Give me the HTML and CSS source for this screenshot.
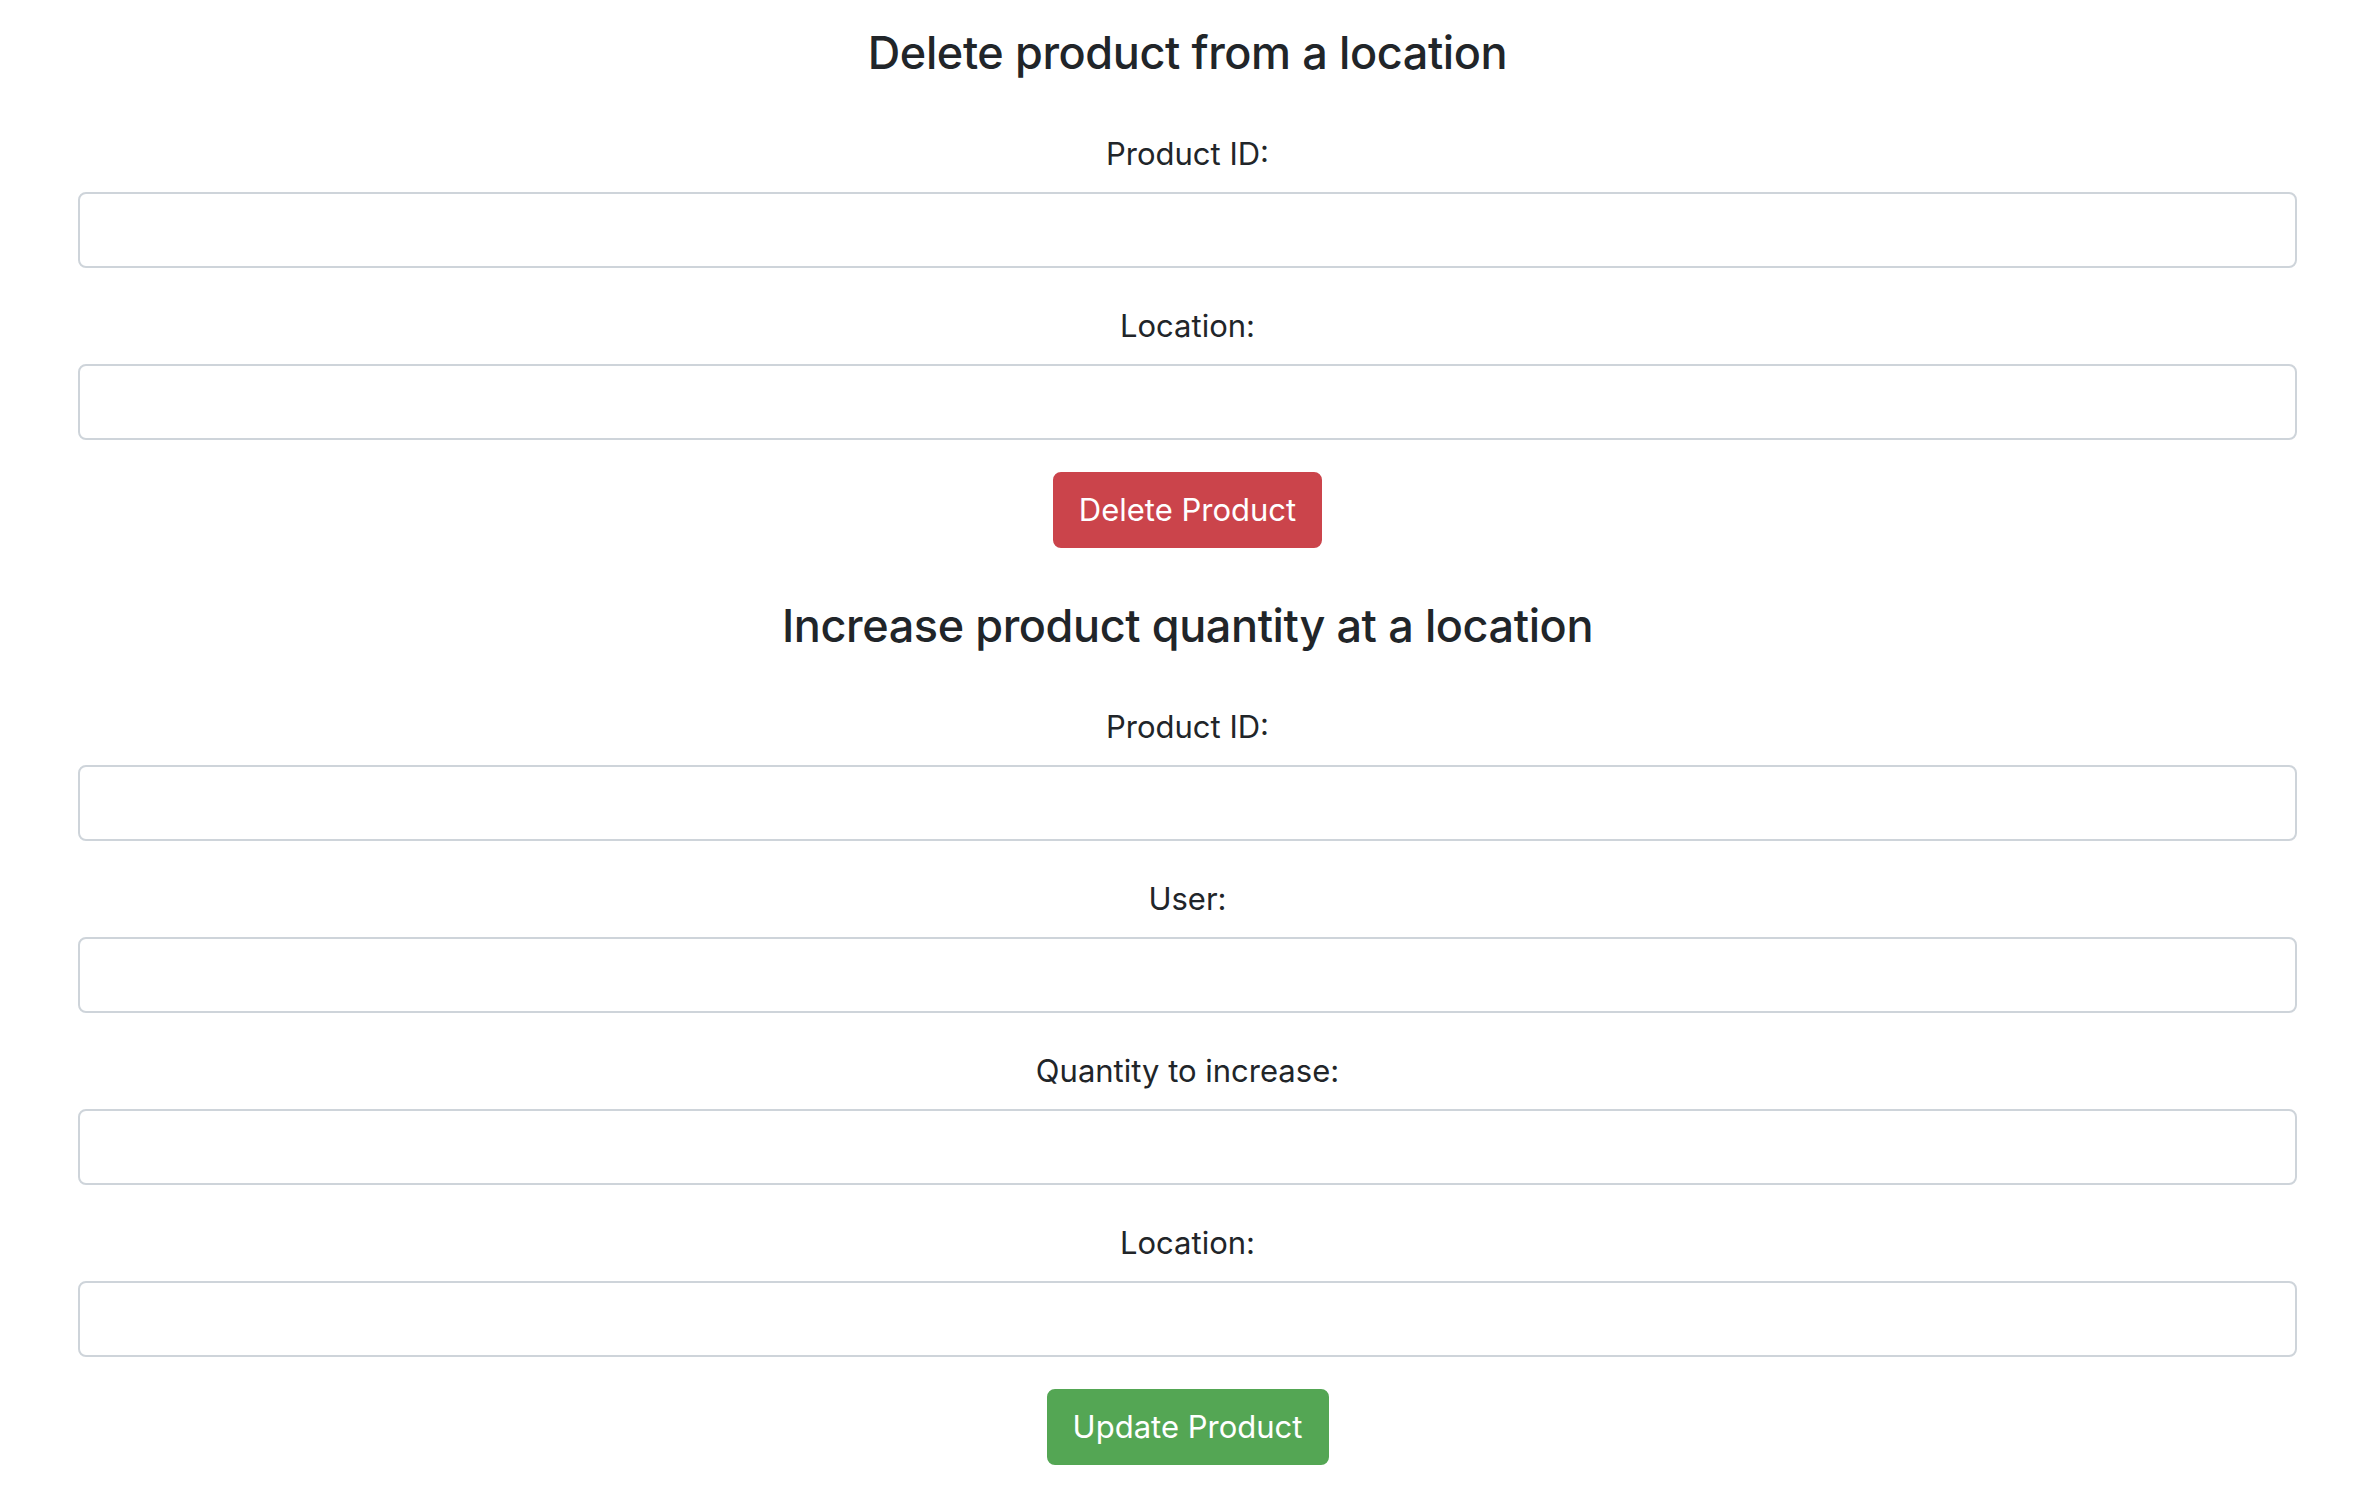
FILE: index.html
```html
<!DOCTYPE html>
<html lang="en">
<head>
<meta charset="utf-8">
<title>Products</title>
<link rel="stylesheet" href="styles.css">
</head>
<body>
<main class="page">
  <section class="panel">
    <h4 class="panel-title">Delete product from a location</h4>
    <form class="form">
      <div class="field">
        <label class="field-label" for="d-pid">Product ID:</label>
        <input class="field-input" id="d-pid" type="text">
      </div>
      <div class="field">
        <label class="field-label" for="d-loc">Location:</label>
        <input class="field-input" id="d-loc" type="text">
      </div>
      <div class="actions">
        <button type="button" class="btn btn-danger">Delete Product</button>
      </div>
    </form>
  </section>
  <section class="panel">
    <h4 class="panel-title">Increase product quantity at a location</h4>
    <form class="form">
      <div class="field">
        <label class="field-label" for="u-pid">Product ID:</label>
        <input class="field-input" id="u-pid" type="text">
      </div>
      <div class="field">
        <label class="field-label" for="u-user">User:</label>
        <input class="field-input" id="u-user" type="text">
      </div>
      <div class="field">
        <label class="field-label" for="u-qty">Quantity to increase:</label>
        <input class="field-input" id="u-qty" type="text">
      </div>
      <div class="field">
        <label class="field-label" for="u-loc">Location:</label>
        <input class="field-input" id="u-loc" type="text">
      </div>
      <div class="actions">
        <button type="button" class="btn btn-success">Update Product</button>
      </div>
    </form>
  </section>
</main>
</body>
</html>
```

FILE: styles.css
```css
* { box-sizing: border-box; }

html, body {
  margin: 0;
  padding: 0;
  background: #ffffff;
}

body {
  font-family: Inter, "Noto Sans", "Liberation Sans", sans-serif;
  color: #212529;
  font-size: 32px;
  line-height: 1.5;
}

.page {
  padding: 0 79px 0 78px;
}

.panel {
  display: flex;
  flex-direction: column;
  text-align: center;
}

.panel-title {
  margin: 24px 0 46px;
  font-size: 45px;
  font-weight: 500;
  line-height: 58px;
  letter-spacing: -0.4px;
}

.form {
  display: flex;
  flex-direction: column;
}

.field {
  display: flex;
  flex-direction: column;
  margin-bottom: 32px;
}

.field-label {
  display: block;
  padding-top: 2px;
  margin-bottom: 14px;
  font-size: 31px;
  line-height: 48px;
}

.field-input {
  display: block;
  width: 100%;
  height: 76px;
  border: 2px solid #ced4da;
  border-radius: 8px;
  background: #fff;
  font: inherit;
  padding: 12px 24px;
}

.actions {
  display: flex;
  justify-content: center;
  margin-bottom: 25px;
}

.btn {
  height: 76px;
  padding: 0 24px;
  border: 2px solid transparent;
  border-radius: 8px;
  color: #fff;
  font-family: inherit;
  font-size: 31px;
  line-height: 48px;
  white-space: nowrap;
}

.btn-danger {
  min-width: 268px;
  background: #cb444b;
  border-color: #cb444b;
}

.btn-success {
  min-width: 282px;
  background: #54a654;
  border-color: #54a654;
}
```
